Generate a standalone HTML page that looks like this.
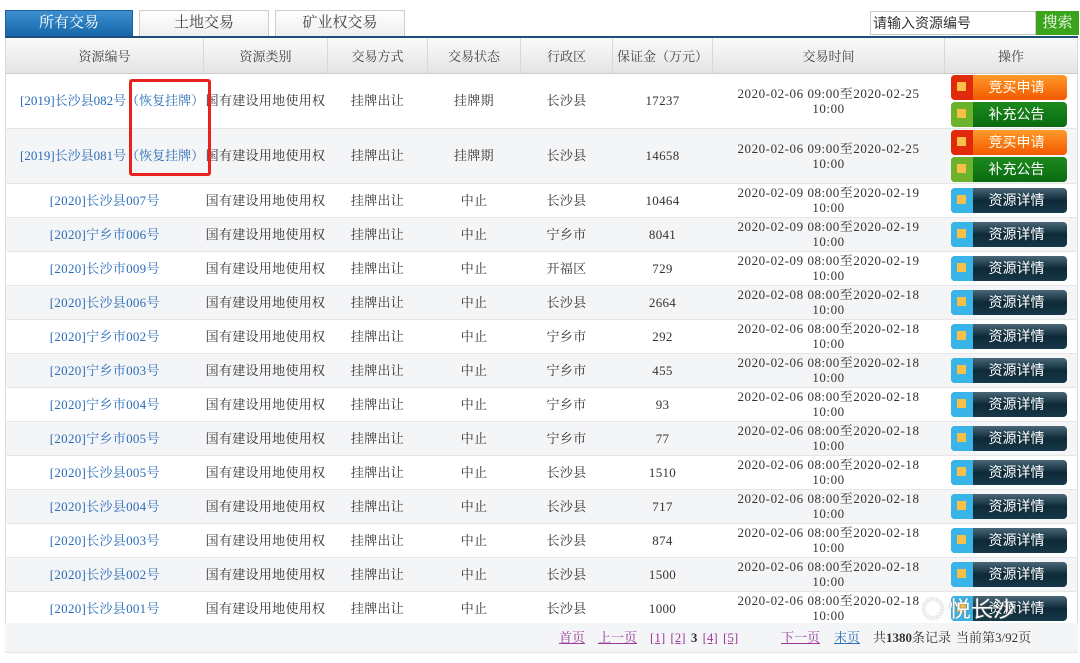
<!DOCTYPE html>
<html><head><meta charset="utf-8"><style>
*{margin:0;padding:0;box-sizing:border-box}
body{width:1080px;height:663px;background:#fff;font-family:"Liberation Serif","Noto Serif CJK SC",serif;font-size:13px;color:#333;position:relative;overflow:hidden}
.tab{position:absolute;top:10px;height:27px;border:1px solid #ccc;border-bottom:none;background:linear-gradient(#fff,#eee);text-align:center;line-height:25px;font-size:15px;color:#444}
.tab.on{background:linear-gradient(#3d8fd0,#1565a8);color:#fff;border-color:#1c5f9a}
.line{position:absolute;left:5px;top:36px;width:1073px;height:2px;background:#1c4f7a}
.search{position:absolute;left:870px;top:11px;width:166px;height:24px;border:1px solid #ccc;font-size:14px;line-height:22px;padding-left:2px;color:#333;font-family:"Liberation Sans","Noto Sans CJK SC",sans-serif}
.sbtn{position:absolute;left:1036px;top:11px;width:43px;height:24px;background:#3aa51c;color:#fff;font-size:15px;text-align:center;line-height:24px}
table{position:absolute;left:5px;top:38px;width:1073px;border-collapse:collapse;border-left:1px solid #ddd;border-right:1px solid #ddd;table-layout:fixed}
th{height:35px;font-weight:normal;background:linear-gradient(#fafafa,#e4e4e4);border-right:1px solid #d8d8d8;border-bottom:1px solid #ccc;color:#444;font-size:13px}
td{text-align:center;border-bottom:1px solid #e6e6e6;padding:0;line-height:15px;letter-spacing:0.3px;white-space:nowrap}
td.tm{letter-spacing:0.55px}
td.f{text-align:left;padding-left:14px;letter-spacing:0}
tr.g td{background:#f4f5f7}
tr.t td{height:55px}
tr.s td{height:34px}
a{color:#2a6cb8;text-decoration:none}
.b{display:block;margin:0 auto 0 6px;width:116px;height:25px;border-radius:4px;position:relative;color:#fff;font-size:14px;line-height:25px;text-align:right;padding-right:22px;letter-spacing:0;font-family:"Liberation Sans","Noto Sans CJK SC",sans-serif}
.b i{position:absolute;left:0;top:0;width:22px;height:25px;border-radius:4px 0 0 4px}
.b i:after{content:"";position:absolute;left:6px;top:7px;width:9px;height:9px;background:#f8c048}
.d{background:linear-gradient(#4a6878,#0e2a38 50%,#163848)}
.d i{background:#38b4e8}
.o{background:linear-gradient(#ff9a2a,#f25800);color:#ffe}
.o i{background:#e12a0a}
.gr{background:linear-gradient(#1c8a1c,#0a6a12)}
.gr i{background:#6cb22a}
.red{position:absolute;left:129px;top:79px;width:82px;height:97px;border:3px solid #e8221c;border-radius:3px}
.pg{position:absolute;left:5px;top:623px;width:1073px;height:30px;background:#f4f5f7;border-bottom:1px solid #e6e6e6;font-size:13px;line-height:30px}
.pg span{position:absolute;white-space:nowrap}
.pg u{color:#9a3a9a}
</style></head><body>
<div class="tab on" style="left:5px;width:128px">所有交易</div>
<div class="tab" style="left:139px;width:130px">土地交易</div>
<div class="tab" style="left:275px;width:130px">矿业权交易</div>
<div class="search">请输入资源编号</div><div class="sbtn">搜索</div>
<div class="line"></div>
<table>
<tr><th style="width:198px">资源编号</th><th style="width:124px">资源类别</th><th style="width:100px">交易方式</th><th style="width:93px">交易状态</th><th style="width:92px">行政区</th><th style="width:100px">保证金（万元）</th><th style="width:232px">交易时间</th><th>操作</th></tr>
<tr class="t"><td class="f"><a>[2019]长沙县082号（恢复挂牌）</a></td><td>国有建设用地使用权</td><td>挂牌出让</td><td>挂牌期</td><td>长沙县</td><td>17237</td><td class="tm">2020-02-06 09:00至2020-02-25<br>10:00</td><td><span class="b o"><i></i>竞买申请</span><span class="b gr" style="margin-top:2px"><i></i>补充公告</span></td></tr>
<tr class="t g"><td class="f"><a>[2019]长沙县081号（恢复挂牌）</a></td><td>国有建设用地使用权</td><td>挂牌出让</td><td>挂牌期</td><td>长沙县</td><td>14658</td><td class="tm">2020-02-06 09:00至2020-02-25<br>10:00</td><td><span class="b o"><i></i>竞买申请</span><span class="b gr" style="margin-top:2px"><i></i>补充公告</span></td></tr>
<tr class="s"><td><a>[2020]长沙县007号</a></td><td>国有建设用地使用权</td><td>挂牌出让</td><td>中止</td><td>长沙县</td><td>10464</td><td class="tm">2020-02-09 08:00至2020-02-19<br>10:00</td><td><span class="b d"><i></i>资源详情</span></td></tr>
<tr class="s g"><td><a>[2020]宁乡市006号</a></td><td>国有建设用地使用权</td><td>挂牌出让</td><td>中止</td><td>宁乡市</td><td>8041</td><td class="tm">2020-02-09 08:00至2020-02-19<br>10:00</td><td><span class="b d"><i></i>资源详情</span></td></tr>
<tr class="s"><td><a>[2020]长沙市009号</a></td><td>国有建设用地使用权</td><td>挂牌出让</td><td>中止</td><td>开福区</td><td>729</td><td class="tm">2020-02-09 08:00至2020-02-19<br>10:00</td><td><span class="b d"><i></i>资源详情</span></td></tr>
<tr class="s g"><td><a>[2020]长沙县006号</a></td><td>国有建设用地使用权</td><td>挂牌出让</td><td>中止</td><td>长沙县</td><td>2664</td><td class="tm">2020-02-08 08:00至2020-02-18<br>10:00</td><td><span class="b d"><i></i>资源详情</span></td></tr>
<tr class="s"><td><a>[2020]宁乡市002号</a></td><td>国有建设用地使用权</td><td>挂牌出让</td><td>中止</td><td>宁乡市</td><td>292</td><td class="tm">2020-02-06 08:00至2020-02-18<br>10:00</td><td><span class="b d"><i></i>资源详情</span></td></tr>
<tr class="s g"><td><a>[2020]宁乡市003号</a></td><td>国有建设用地使用权</td><td>挂牌出让</td><td>中止</td><td>宁乡市</td><td>455</td><td class="tm">2020-02-06 08:00至2020-02-18<br>10:00</td><td><span class="b d"><i></i>资源详情</span></td></tr>
<tr class="s"><td><a>[2020]宁乡市004号</a></td><td>国有建设用地使用权</td><td>挂牌出让</td><td>中止</td><td>宁乡市</td><td>93</td><td class="tm">2020-02-06 08:00至2020-02-18<br>10:00</td><td><span class="b d"><i></i>资源详情</span></td></tr>
<tr class="s g"><td><a>[2020]宁乡市005号</a></td><td>国有建设用地使用权</td><td>挂牌出让</td><td>中止</td><td>宁乡市</td><td>77</td><td class="tm">2020-02-06 08:00至2020-02-18<br>10:00</td><td><span class="b d"><i></i>资源详情</span></td></tr>
<tr class="s"><td><a>[2020]长沙县005号</a></td><td>国有建设用地使用权</td><td>挂牌出让</td><td>中止</td><td>长沙县</td><td>1510</td><td class="tm">2020-02-06 08:00至2020-02-18<br>10:00</td><td><span class="b d"><i></i>资源详情</span></td></tr>
<tr class="s g"><td><a>[2020]长沙县004号</a></td><td>国有建设用地使用权</td><td>挂牌出让</td><td>中止</td><td>长沙县</td><td>717</td><td class="tm">2020-02-06 08:00至2020-02-18<br>10:00</td><td><span class="b d"><i></i>资源详情</span></td></tr>
<tr class="s"><td><a>[2020]长沙县003号</a></td><td>国有建设用地使用权</td><td>挂牌出让</td><td>中止</td><td>长沙县</td><td>874</td><td class="tm">2020-02-06 08:00至2020-02-18<br>10:00</td><td><span class="b d"><i></i>资源详情</span></td></tr>
<tr class="s g"><td><a>[2020]长沙县002号</a></td><td>国有建设用地使用权</td><td>挂牌出让</td><td>中止</td><td>长沙县</td><td>1500</td><td class="tm">2020-02-06 08:00至2020-02-18<br>10:00</td><td><span class="b d"><i></i>资源详情</span></td></tr>
<tr class="s"><td><a>[2020]长沙县001号</a></td><td>国有建设用地使用权</td><td>挂牌出让</td><td>中止</td><td>长沙县</td><td>1000</td><td class="tm">2020-02-06 08:00至2020-02-18<br>10:00</td><td><span class="b d"><i></i>资源详情</span></td></tr>
</table>
<div class="red"></div>
<div class="pg">
<span style="left:554px"><u>首页</u></span>
<span style="left:593px"><u>上一页</u></span>
<span style="left:645px;word-spacing:2px"><u>[1]</u> <u>[2]</u> <b>3</b> <u>[4]</u> <u>[5]</u></span>
<span style="left:776px"><u>下一页</u></span>
<span style="left:829px"><u style="color:#2a6cb8">末页</u></span>
<span style="left:868px">共<b>1380</b>条记录</span>
<span style="left:951px">当前第3/92页</span>
</div>
<div style="position:absolute;left:922px;top:592px;font-size:22px;color:#fff;text-shadow:0 0 2px #777;font-family:'Noto Sans CJK SC',sans-serif">◌ 悦长沙</div>
</body></html>
